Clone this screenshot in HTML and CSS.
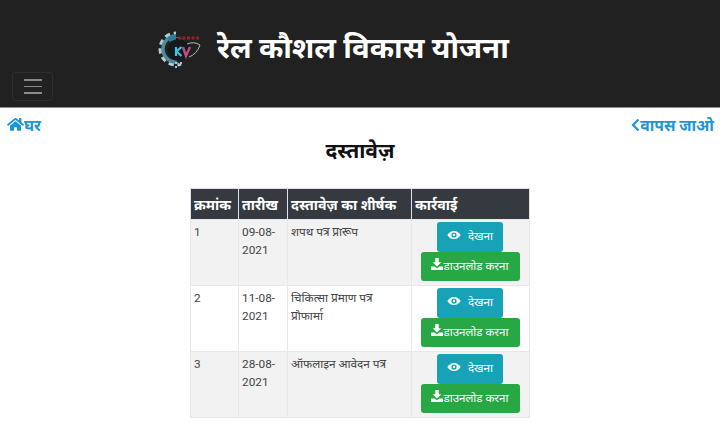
FILE: index.html
```html
<!DOCTYPE html>
<html lang="hi">
<head>
<meta charset="utf-8">
<title>रेल कौशल विकास योजना</title>
<link rel="stylesheet" href="styles.css">
</head>
<body>
<header class="navbar">
  <div class="brand">
    <svg class="logo" viewBox="0 0 44 38" aria-hidden="true">
      <circle cx="18" cy="18" r="15" fill="none" stroke="#b4cdd3" stroke-width="5" stroke-dasharray="5 3.500"/>
      <circle cx="18" cy="18" r="13" fill="none" stroke="#4f8a9b" stroke-width="3.500"/>
      <path d="M9 7a14 14 0 0 1 9-3.500V9a9 9 0 0 0-6 2z" fill="#2a7f98"/>
      <path d="M18 0h26v38H18l6-4-6-4a12 12 0 0 0 0-24z" fill="#212121"/>
      <circle cx="21" cy="19" r="11" fill="#15191c"/>
      <path d="M20 7h22" stroke="#8f2327" stroke-width="3" stroke-dasharray="3 1.500"/>
      <path d="M18 16v9M23.500 16l-5 4.500 5 4.500" fill="none" stroke="#45bfe0" stroke-width="2.200"/>
      <path d="M25 16l3 9 4-9" fill="none" stroke="#b94f7c" stroke-width="2.400"/>
      <path d="M31 26q8-3 11-12M29 13q7-3 13 1" fill="none" stroke="#aab7bc" stroke-width="1"/>
      <path d="M17 31h2v2h-2zM22 31h2v2h-2zM17 35h2v2h-2z" fill="#9fc4cc"/>
    </svg>
    <h1 class="title">रेल कौशल विकास योजना</h1>
  </div>
  <button class="toggler" type="button" aria-label="मेनू"><span></span><span></span><span></span></button>
</header>

<nav class="links">
  <a href="#" class="link">
    <svg class="ico-home" viewBox="0 0 576 512" aria-hidden="true"><path d="M280 148L100 296v160c0 9 7 16 16 16l109-1c9 0 16-7 16-16v-93c0-9 7-16 16-16h64c9 0 16 7 16 16v93c0 9 7 16 16 16l109 1c9 0 16-7 16-16V296L296 148c-5-4-11-4-16 0zM572 249l-82-67V47c0-7-5-12-12-12h-56c-7 0-12 5-12 12v71l-90-74c-18-15-43-15-61 0L4 249c-5 4-6 12-2 17l26 31c4 5 12 6 17 2L280 105c4-4 11-4 15 0l236 194c5 4 13 3 17-2l26-31c4-5 3-13-2-17z"/></svg>घर
  </a>
  <a href="#" class="link">
    <svg class="ico-back" viewBox="0 0 9 14" aria-hidden="true"><path d="M7.500 1.500L2 7l5.500 5.500" fill="none" stroke="currentColor" stroke-width="2.200"/></svg>वापस जाओ
  </a>
</nav>

<h2 class="heading">दस्तावेज़</h2>

<table class="docs">
  <thead>
    <tr><th class="c1">क्रमांक</th><th class="c2">तारीख</th><th class="c3">दस्तावेज़ का शीर्षक</th><th class="c4">कार्रवाई</th></tr>
  </thead>
  <tbody>
    <tr>
      <td>1</td><td>09-08-2021</td><td class="name">शपथ पत्र प्रारूप</td>
      <td class="actions">
        <a href="#" class="btn view"><svg class="ico-eye" viewBox="0 0 24 16" aria-hidden="true"><path fill-rule="evenodd" d="M12 1C7 1 3 4 .5 8 3 12 7 15 12 15s9-3 11.500-7C21 4 17 1 12 1zm0 11.500a4.500 4.500 0 1 1 0-9 4.500 4.500 0 0 1 0 9zM12 6a2 2 0 1 0 0 4 2 2 0 0 0 0-4z"/></svg>देखना</a>
        <a href="#" class="btn get"><svg class="ico-dl" viewBox="0 0 14 14" aria-hidden="true"><path d="M5 0h4v5h3L7 10 2 5h3zM0 10h4l3 2 3-2h4v4H0z"/></svg>डाउनलोड करना</a>
      </td>
    </tr>
    <tr>
      <td>2</td><td>11-08-2021</td><td class="name">चिकित्सा प्रमाण पत्र प्रोफार्मा</td>
      <td class="actions">
        <a href="#" class="btn view"><svg class="ico-eye" viewBox="0 0 24 16" aria-hidden="true"><path fill-rule="evenodd" d="M12 1C7 1 3 4 .5 8 3 12 7 15 12 15s9-3 11.500-7C21 4 17 1 12 1zm0 11.500a4.500 4.500 0 1 1 0-9 4.500 4.500 0 0 1 0 9zM12 6a2 2 0 1 0 0 4 2 2 0 0 0 0-4z"/></svg>देखना</a>
        <a href="#" class="btn get"><svg class="ico-dl" viewBox="0 0 14 14" aria-hidden="true"><path d="M5 0h4v5h3L7 10 2 5h3zM0 10h4l3 2 3-2h4v4H0z"/></svg>डाउनलोड करना</a>
      </td>
    </tr>
    <tr>
      <td>3</td><td>28-08-2021</td><td class="name">ऑफलाइन आवेदन पत्र</td>
      <td class="actions">
        <a href="#" class="btn view"><svg class="ico-eye" viewBox="0 0 24 16" aria-hidden="true"><path fill-rule="evenodd" d="M12 1C7 1 3 4 .5 8 3 12 7 15 12 15s9-3 11.500-7C21 4 17 1 12 1zm0 11.500a4.500 4.500 0 1 1 0-9 4.500 4.500 0 0 1 0 9zM12 6a2 2 0 1 0 0 4 2 2 0 0 0 0-4z"/></svg>देखना</a>
        <a href="#" class="btn get"><svg class="ico-dl" viewBox="0 0 14 14" aria-hidden="true"><path d="M5 0h4v5h3L7 10 2 5h3zM0 10h4l3 2 3-2h4v4H0z"/></svg>डाउनलोड करना</a>
      </td>
    </tr>
  </tbody>
</table>
</body>
</html>
```
FILE: styles.css
```css
* { box-sizing: border-box; }
html, body { margin: 0; padding: 0; }
body {
  width: 720px;
  height: 430px;
  overflow: hidden;
  background: #fff;
  color: #212529;
  font-family: Roboto, "Noto Sans", "Liberation Sans", sans-serif;
  font-size: 12px;
}
.navbar {
  height: 108px;
  background: #212121;
  border-bottom: 1px solid #8a8a8a;
  padding: 27px 0 0 12px;
}
.brand {
  display: flex;
  align-items: center;
  gap: 15px;
  padding-left: 146px;
  height: 42px;
}
.logo { width: 44px; height: 38px; flex: none; margin-top: 3px; }
.title {
  margin: 0;
  color: #fff;
  font-size: 29.400px;
  font-weight: 700;
  line-height: 42px;
  white-space: nowrap;
}
.toggler {
  display: flex;
  flex-direction: column;
  justify-content: center;
  gap: 5px;
  width: 41px;
  height: 29px;
  margin-top: 3px;
  padding: 0 11px;
  background: transparent;
  border: 1px solid #2e2e2e;
  border-radius: 3px;
}
.toggler span { display: block; height: 1.500px; width: 18px; background: #8a8a8a; }
.links {
  display: flex;
  justify-content: space-between;
  padding: 7px 6px 0 7px;
  height: 31px;
}
.link {
  display: flex;
  align-items: center;
  height: 19px;
  color: #1b95d6;
  font-size: 15.600px;
  font-weight: 700;
  text-decoration: none;
}
.ico-home { width: 17px; height: 15px; fill: currentColor; }
.ico-back { width: 9px; height: 14px; }
.heading {
  margin: 0;
  height: 49px;
  color: #111;
  font-size: 21px;
  line-height: 24px;
  font-weight: 700;
  text-align: center;
}
.docs {
  width: 339px;
  margin: 0 0 0 190px;
  border-collapse: collapse;
  table-layout: fixed;
  border: 1px solid #dee2e6;
  font-size: 11.800px;
}
.docs th {
  height: 31px;
  padding: 0 3px;
  background: #343a40;
  color: #fff;
  font-size: 14.200px;
  font-weight: 700;
  text-align: left;
  border-left: 1px solid #dee2e6;
  white-space: nowrap;
}
.c1 { width: 48px; }
.c2 { width: 49px; }
.c3 { width: 124px; }
.c4 { width: 118px; }
.docs td {
  height: 66px;
  padding: 3px 4px 3px 3px;
  vertical-align: top;
  line-height: 18px;
  border: 1px solid #e6e8ea;
  color: #444;
}
.docs td.name { padding-right: 20px; }
.docs tbody tr:nth-child(odd) td { background: #f2f2f2; }
.docs td.actions {
  padding: 2px 1px 0 0;
  text-align: center;
}
.btn {
  display: block;
  margin: 0 auto;
  height: 29.500px;
  border-radius: 3px;
  color: #fff;
  font-size: 11.600px;
  line-height: 29px;
  text-decoration: none;
  white-space: nowrap;
}
.view { width: 66px; background: #17a2b8; }
.get { width: 99px; background: #28a745; }
.ico-eye { width: 14px; height: 10px; fill: #fff; margin-right: 7px; }
.ico-dl { width: 12px; height: 12px; fill: #fff; }
```
